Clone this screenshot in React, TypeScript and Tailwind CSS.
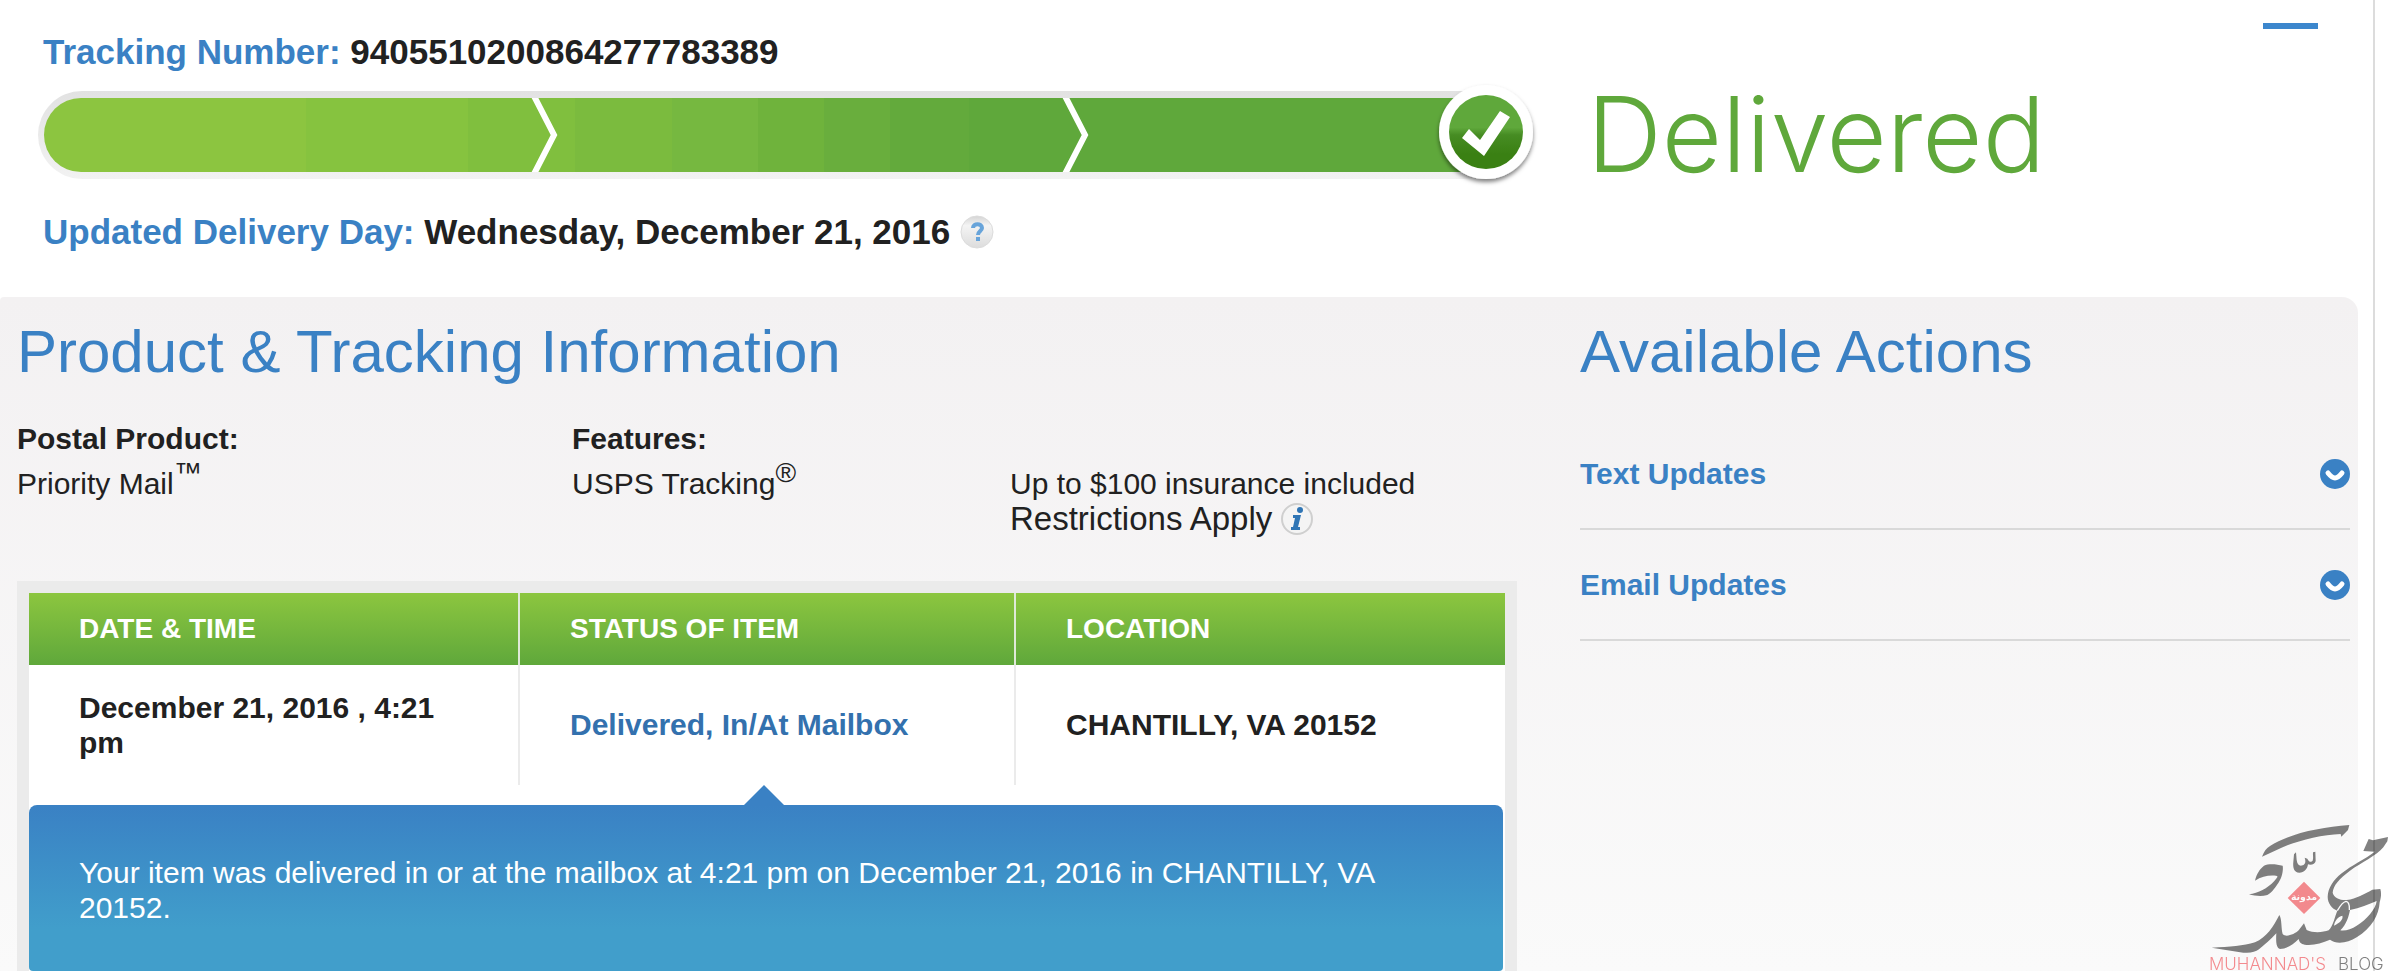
import React from "react";

const STEPS = [
  { x: 44, width: 262, fill: "#8cc540" },
  { x: 306, width: 162, fill: "#86c33f" },
  { x: 468, width: 107, fill: "#80bf3e" },
  { x: 575, width: 97, fill: "#7bbb3e" },
  { x: 672, width: 86, fill: "#76b840" },
  { x: 758, width: 66, fill: "#6fb33c" },
  { x: 824, width: 66, fill: "#69ae3d" },
  { x: 890, width: 79, fill: "#63aa3c" },
  { x: 969, width: 517, fill: "#5fa83b" },
];

function ProgressBar() {
  return (
    <svg
      viewBox="37 80 1502 108"
      className="w-[1502px] h-[108px] shrink-0"
      role="img"
      aria-label="Progress"
    >
      <defs>
        <linearGradient id="rim" x1="0" y1="0" x2="0" y2="1">
          <stop offset="0" stopColor="#e2e2e2" />
          <stop offset="1" stopColor="#f2f2f2" />
        </linearGradient>
        <linearGradient id="ball" x1="0" y1="0" x2="0" y2="1">
          <stop offset="0.44" stopColor="#5fa83b" />
          <stop offset="0.54" stopColor="#468c23" />
          <stop offset="0.8" stopColor="#3a8013" />
        </linearGradient>
        <filter id="shade" x="-20%" y="-20%" width="140%" height="140%">
          <feDropShadow dx="0" dy="3" stdDeviation="2" floodOpacity="0.5" />
        </filter>
        <clipPath id="track">
          <rect x="44" y="98" width="1460" height="74" rx="37" />
        </clipPath>
      </defs>
      <rect x="38" y="91" width="1470" height="88" rx="44" fill="url(#rim)" />
      <g clipPath="url(#track)">
        {STEPS.map((s) => (
          <rect key={s.x} x={s.x} y="98" width={s.width} height="74" fill={s.fill} />
        ))}
        <path d="M534 96 554 135 534 174M1065 96l20 39-20 39" fill="none" stroke="#fff" strokeWidth="6" />
      </g>
      <circle cx="1486" cy="132" r="47" fill="#fff" filter="url(#shade)" />
      <circle cx="1486" cy="132" r="37" fill="url(#ball)" />
      <path d="M1462 138l7-9 11 11 20-29 10 6-26 39z" fill="#fff" />
    </svg>
  );
}

function HelpIcon() {
  return (
    <svg viewBox="0 0 34 36" className="w-[34px] h-9">
      <defs>
        <linearGradient id="help" x1="0" y1="0" x2="0" y2="1">
          <stop offset="0" stopColor="#d4d4d4" />
          <stop offset="0.3" stopColor="#f4f4f4" />
          <stop offset="1" stopColor="#dcdcdc" />
        </linearGradient>
      </defs>
      <circle cx="17" cy="18" r="16" fill="url(#help)" stroke="#dcdcdc" strokeWidth="1" />
      <path d="M13 14c0-5 9-5 9 0 0 3-4 3-4 7M18 23v4" fill="none" stroke="#68a4da" strokeWidth="4" />
    </svg>
  );
}

function InfoIcon() {
  return (
    <svg viewBox="0 0 34 34" className="w-[34px] h-[34px]">
      <circle cx="17" cy="17" r="15" fill="#f4f4f4" stroke="#cfcfcf" strokeWidth="2" />
      <path d="M13 13h8l-3 12h2v3h-9v-3h2l2-9h-2z" fill="#2f75b5" />
      <circle cx="20" cy="8" r="3" fill="#2f75b5" />
    </svg>
  );
}

function ChevronBadge() {
  return (
    <svg viewBox="0 0 30 30" className="w-[30px] h-[30px]">
      <circle cx="15" cy="15" r="15" fill="#3a81c4" />
      <path d="M8 14q4 5 7 5t7-5" fill="none" stroke="#fff" strokeWidth="5" strokeLinecap="round" />
    </svg>
  );
}

function BlogMark() {
  return (
    <svg
      viewBox="0 0 624 513"
      className="absolute right-0 bottom-0 w-[208px] h-[171px] overflow-visible opacity-50 font-['Inter',sans-serif] font-light"
    >
      <g fill="#050505">
        <path d="M246 170C252 155 258 145 270 138C330 100 420 82 508 75L504 90L484 110L482 102C420 104 340 125 290 150Z" />
        <path d="M342 163L348 157L350 180C352 195 358 199 368 196C376 193 378 185 374 173L382 176C386 186 394 188 398 182C401 174 398 166 399 157L406 155L407 183C406 192 394 196 384 193C382 208 372 218 358 218C342 218 338 202 340 185Z" />
        <path d="M225 242C230 222 238 208 252 197C265 190 290 192 308 197C310 206 308 225 300 240C288 262 275 278 262 285C245 290 225 288 207 283C235 280 262 265 283 243C292 232 296 228 288 227C268 225 245 228 225 242Z" />
        {/* hook that runs down into the bowl */}
        <path d="M550 153L566 117L579 121L624 111L622 124L610 142C590 166 545 188 510 212C478 236 460 255 458 278C462 294 480 301 500 300C530 296 552 282 577 269L601 267C605 280 603 292 599 307C597 345 575 385 530 412C505 428 470 435 450 419C425 430 400 437 374 434C362 432 358 426 356 417C340 434 320 446 300 447C290 444 287 430 289 400C275 415 250 438 237 448C226 456 212 460 190 458L95 443C150 441 190 438 225 427C260 412 280 380 298 345C306 356 303 385 308 402C318 414 345 402 356 391L372 370L380 390C400 400 430 397 446 391C460 378 464 350 472 332C456 326 443 310 443 290C444 265 460 240 485 220C515 195 555 178 584 155Z" />
      </g>
      {/* openings inside the bowl and the loop */}
      <path d="M510 330C540 324 566 312 590 303C588 325 560 360 530 377C515 387 495 394 481 391C500 372 506 350 510 330ZM462 377C464 362 474 350 487 347C491 358 478 369 462 377Z" fill="#fff" />
      <path d="M472 332C480 318 488 306 498 304C510 306 508 320 508 330" fill="none" stroke="#fff" strokeWidth="4" />
      <path d="M372 245L421 294L372 342L323 294Z" fill="#ed1c24" />
      <text x="372" y="300" textAnchor="middle" fontSize="28" fill="#fff" className="font-['DejaVu_Sans',sans-serif] font-bold">
        مدونة
      </text>
      <text x="87" y="510" fontSize="51" fill="#ed1c24">
        MUHANNAD'S
      </text>
      <text x="474" y="510" fontSize="51" fill="#050505">
        BLOG
      </text>
    </svg>
  );
}

const ACTIONS = ["Text Updates", "Email Updates"];

export default function App() {
  return (
    <div className="relative min-h-screen overflow-hidden bg-white pr-[13px] font-['Liberation_Sans',Arial,sans-serif] text-[30px] leading-[35px] text-[#212121]">
      <div className="min-h-screen border-r-2 border-[#dcdcdc] pr-[15px]">
        <header className="relative h-[297px] pl-[43px] pt-8">
          <button type="button" aria-label="Collapse" className="absolute right-10 top-[23px] h-1.5 w-[55px] bg-[#3c87cd]" />
          <p className="text-[35px] leading-10 font-bold">
            <span className="text-[#3a81c4]">Tracking Number:</span> 9405510200864277783389
          </p>
          <div className="-ml-1.5 mt-2 flex h-[108px] items-center gap-12">
            <ProgressBar />
            <span className="font-['Inter',sans-serif] text-[104px] leading-[110px] font-light text-[#5fa83b]">Delivered</span>
          </div>
          <div className="mt-6 flex items-center gap-2.5 text-[35px] leading-10 font-bold">
            <p>
              <span className="text-[#3a81c4]">Updated Delivery Day:</span> Wednesday, December 21, 2016
            </p>
            <button type="button" aria-label="Help">
              <HelpIcon />
            </button>
          </div>
        </header>

        <main className="flex min-h-[674px] gap-[63px] rounded-tl-sm rounded-tr-2xl bg-linear-to-b from-[#f3f1f2] to-[#fafafa] pl-[17px] pr-2 pt-5">
          <section className="w-[1500px] shrink-0">
            <h2 className="text-[60px] leading-[70px] text-[#3a81c4]">Product &amp; Tracking Information</h2>
            <div className="mt-[34px] flex h-40">
              <div className="w-[555px]">
                <h3 className="font-bold">Postal Product:</h3>
                <p className="mt-2.5">
                  Priority Mail<sup className="-top-3 text-[28px]">™</sup>
                </p>
              </div>
              <div className="w-[438px]">
                <h3 className="font-bold">Features:</h3>
                <p className="mt-2.5">
                  USPS Tracking<sup className="-top-3 text-[28px]">®</sup>
                </p>
              </div>
              <div className="pt-[45px]">
                <p>Up to $100 insurance included</p>
                <div className="flex items-center gap-2">
                  <span className="text-[33px]">Restrictions Apply</span>
                  <button type="button" aria-label="Restrictions">
                    <InfoIcon />
                  </button>
                </div>
              </div>
            </div>

            <div className="border-12 border-b-0 border-[#ebebeb] bg-white">
              <table className="w-full table-fixed font-bold">
                <thead>
                  <tr className="h-[72px] bg-linear-to-b from-[#8cc63f] to-[#5fa83b] text-left text-[28px] text-white">
                    <th className="w-[490px] border-r-2 border-[#dfe9d8] pb-0.5 pl-[50px]">DATE &amp; TIME</th>
                    <th className="w-[496px] border-r-2 border-[#dfe9d8] pb-0.5 pl-[50px]">STATUS OF ITEM</th>
                    <th className="pb-0.5 pl-[50px]">LOCATION</th>
                  </tr>
                </thead>
                <tbody>
                  <tr className="h-[120px]">
                    <td className="border-r-2 border-[#ebebeb] pl-[50px] pr-12">December 21, 2016 , 4:21 pm</td>
                    <td className="border-r-2 border-[#ebebeb] pb-0.5 pl-[50px]">
                      <a href="#details" className="text-[#3371ae]">
                        Delivered, In/At Mailbox
                      </a>
                    </td>
                    <td className="pb-0.5 pl-[50px]">CHANTILLY, VA 20152</td>
                  </tr>
                </tbody>
              </table>
              <svg viewBox="0 0 40 20" className="ml-[715px] block h-5 w-10">
                <path d="M20 0 40 20H0Z" fill="#3a81c4" />
              </svg>
              <div id="details" className="mr-0.5 h-[166px] rounded-t-lg rounded-b-sm bg-linear-to-b from-[#3a81c4] to-[#419ecb] to-75% px-[50px] pt-[50px] text-white">
                Your item was delivered in or at the mailbox at 4:21 pm on December 21, 2016 in CHANTILLY, VA 20152.
              </div>
            </div>
          </section>

          <aside className="flex-1">
            <h2 className="text-[60px] leading-[70px] text-[#3a81c4]">Available Actions</h2>
            <ul className="mt-8">
              {ACTIONS.map((label) => (
                <li key={label} className="border-b-2 border-[#d9d9d9]">
                  <button type="button" className="flex h-[109px] w-full items-center justify-between font-bold text-[#3a81c4]">
                    {label}
                    <ChevronBadge />
                  </button>
                </li>
              ))}
            </ul>
          </aside>
        </main>
      </div>
      <BlogMark />
    </div>
  );
}
